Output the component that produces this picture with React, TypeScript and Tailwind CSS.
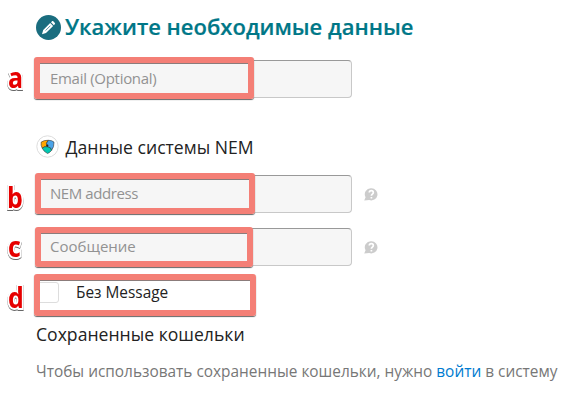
import React from 'react';

type MarkProps = {
  letter: string;
  box: string;
  label: string;
};

// Red frame with its letter, lies over the form row
function Mark({ letter, box, label }: MarkProps) {
  return (
    <>
      <div
        className={`pointer-events-none absolute rounded-[3px] border-6 border-[#f47f76] shadow-[0_1px_1px_#666] ${box}`}
      >
        <div className="h-px bg-[#8b7c7b]"></div>
      </div>
      <span
        className={`absolute origin-left scale-x-[0.86] text-[29px] leading-[30px] font-bold text-[#e60000] [paint-order:stroke_fill] [-webkit-text-stroke:4px_white] drop-shadow-[0_1px_0.5px_rgba(0,0,0,0.6)] ${label}`}
      >
        {letter}
      </span>
    </>
  );
}

function Field({ placeholder, tracking }: { placeholder: string; tracking?: string }) {
  return (
    <input
      type="text"
      placeholder={placeholder}
      className={`h-[38px] w-[316px] rounded-[4px] border border-[#c8c8c8] border-t-[#999] bg-[#f6f6f6] px-[13px] pb-0.5 text-[15px] outline-none placeholder:text-[#929292] ${tracking ?? ''}`}
    />
  );
}

function HelpIcon() {
  return (
    <svg className="ml-3 h-[13px] w-[14px]" viewBox="0 0 14 13">
      <path d="M7.4 0.2a6.1 6.1 0 1 1-2.2 11.8L0.2 12.6 1.6 9.3A6.1 6.1 0 0 1 7.4 0.2Z" fill="#ccc" />
      <path d="M5.3 4.5c.1-2.6 4-2.5 4 0 0 1.6-1.9 1.5-1.9 3.2M7.4 9v1.5" fill="none" stroke="#fff" strokeWidth="1.7" />
    </svg>
  );
}

export default function App() {
  return (
    <div className="flex h-[400px] w-[569px] flex-col overflow-hidden bg-white pt-[15px] pl-9 font-['Open_Sans',sans-serif] whitespace-nowrap text-[#222]">
      <div className="flex h-[25px] items-center">
        <svg className="size-[25px] shrink-0" viewBox="0 0 25 25">
          <circle cx="12.5" cy="12.5" r="12.5" fill="#1a6d7f" />
          <path d="M6 19.2 7.2 15.1 14.2 8.1 17.1 11 10 18ZM15 7.3 16.3 6c.5-.5 3.3 2.2 2.8 2.8L17.9 10.2Z" fill="#fff" />
          <path d="M9.6 15.5 14.4 10.7" stroke="#1a6d7f" strokeWidth="0.7" />
        </svg>
        <h1 className="mb-0.5 ml-1 text-[22px] leading-[25px] font-semibold text-[#007787] [-webkit-text-stroke:0.2px_#007787]">
          Укажите необходимые данные
        </h1>
      </div>

      <div className="relative mt-5 flex h-[38px] items-center">
        <Field placeholder="Email (Optional)" tracking="tracking-[-0.3px]" />
        <Mark letter="a" box="-left-0.5 -top-[3px] h-[42px] w-[220px]" label="-left-[28.5px] top-[2px]" />
      </div>

      <div className="mt-[37px] flex h-[23px] items-center">
        <svg className="size-[23px] shrink-0" viewBox="0 0 23 23">
          <circle cx="11.5" cy="11.5" r="10.7" fill="#fff" stroke="#ddd" />
          <path d="M5.2 7.1Q8 5 12.4 5.3L10.5 8.2 11.5 11.8Q8.5 11 6.2 13.2 4.6 10.3 5.2 7.1Z" fill="#ffa500" stroke="#333" strokeWidth="0.6" />
          <path d="M12.4 5.3Q15.8 5.2 18 7.1 18.2 12 15.6 15.3 15.2 12.3 11.5 11.8L10.5 8.2Z" fill="#4ba3e8" stroke="#333" strokeWidth="0.6" />
          <path d="M6.2 13.2Q8.5 11 11.5 11.8 15.2 12.3 15.6 15.3 14 17.5 11.6 18.5 8 17 6.2 13.2Z" fill="#00c9b3" stroke="#333" strokeWidth="0.6" />
          <circle cx="11.3" cy="10.6" r="1.1" fill="#222" />
        </svg>
        <h2 className="mt-0.5 ml-[6.5px] text-[17.6px] leading-[23px]">Данные системы NEM</h2>
      </div>

      <div className="relative mt-[17px] flex h-[38px] items-center">
        <Field placeholder="NEM address" tracking="tracking-[-0.42px]" />
        <HelpIcon />
        <Mark letter="b" box="-left-px -top-0.5 h-[41px] w-[220px]" label="-left-[29.5px] top-[7px]" />
      </div>

      <div className="relative mt-[15px] flex h-[38px] items-center">
        <Field placeholder="Сообщение" />
        <HelpIcon />
        <Mark letter="c" box="-left-px -top-px h-[40px] w-[218px]" label="-left-[28.5px] top-[3px]" />
      </div>

      <div className="relative mt-4 flex h-[21px] items-center">
        <div className="h-[21px] w-[23px] rounded-[3px] border border-[#ddd]"></div>
        <span className="ml-[17px] text-[15.4px] leading-[21px]">Без Message</span>
        <Mark letter="d" box="-left-0.5 -top-2 h-[42px] w-[222px]" label="-left-[28.5px] top-0" />
      </div>

      <h2 className="mt-[19px] text-[17.6px] leading-[25px]">Сохраненные кошельки</h2>
      <p className="mt-3 text-[15.4px] leading-[25px] text-[#777]">
        Чтобы использовать сохраненные кошельки, нужно <a className="text-[#007bd0]">войти</a> в систему
      </p>
    </div>
  );
}
